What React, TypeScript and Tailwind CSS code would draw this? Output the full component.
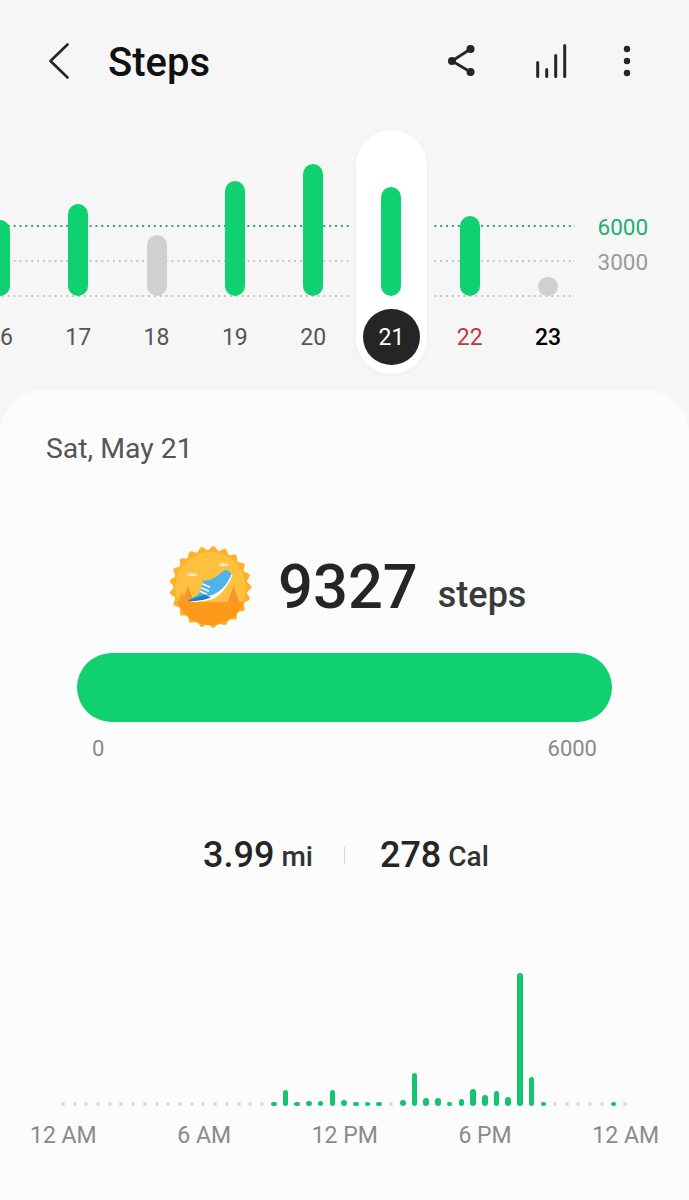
const GREEN = "#10d170";

const days = [
  { label: "16", top: 220, color: "bg-[#10d170]", text: "text-[#555555]" },
  { label: "17", top: 204, color: "bg-[#10d170]", text: "text-[#555555]" },
  { label: "18", top: 235, color: "bg-[#d0d0d0]", text: "text-[#555555]" },
  { label: "19", top: 181, color: "bg-[#10d170]", text: "text-[#555555]" },
  { label: "20", top: 164, color: "bg-[#10d170]", text: "text-[#555555]" },
  { label: "21", top: 187, color: "bg-[#10d170]", text: "text-white", active: true },
  { label: "22", top: 216, color: "bg-[#10d170]", text: "text-[#c0393b]" },
  { label: "23", top: 277, color: "bg-[#d0d0d0]", text: "text-black font-medium" },
];

// half-hour bars, 0 = no steps
const hours = [
  0, 0, 0, 0, 0, 0, 0, 0, 0, 0, 0, 0, 0, 0, 0, 0, 0, 0, 4, 16, 4, 5, 5, 16, 6, 4, 4, 4, 0, 6, 33, 8, 8, 4, 7, 17, 11,
  15, 9, 133, 29, 4, 0, 0, 0, 0, 0, 4, 0,
];

function scallop(cx: number, cy: number, r: number, bumps: number, depth: number) {
  let d = "";
  const n = bumps * 12;
  for (let i = 0; i < n; i++) {
    const a = (i / n) * Math.PI * 2;
    const rr = r + depth * Math.cos(a * bumps);
    d += `${i ? "L" : "M"}${(cx + rr * Math.cos(a)).toFixed(2)} ${(cy + rr * Math.sin(a)).toFixed(2)}`;
  }
  return d + "Z";
}

function Badge() {
  return (
    <svg width="84" height="84" viewBox="0 0 84 84" className="shrink-0">
      <path d={scallop(41.5, 42, 39, 21, 2)} fill="#fcb32c" />
      <circle cx="41.5" cy="42" r="35" fill="#fdc13f" />
      <path d="M7.4 57h68.2a35 35 0 0 1-6 9.5A35 35 0 0 1 13.4 66 35 35 0 0 1 7.4 57Z" fill="#fd9a1a" />
      <path d="M18 31h10a2.4 2.4 0 0 0-4-2 2.6 2.6 0 0 0-4.6.6A1.4 1.4 0 0 0 18 31Z" fill="#fde9bd" />
      <path d="M49.5 21h10a2.4 2.4 0 0 0-4-2 2.6 2.6 0 0 0-4.6.6 1.4 1.4 0 0 0-1.4 1.4Z" fill="#fde9bd" />
      <path d="M9 57l4-10 4 10Z" fill="#f7a02e" />
      <path d="M13 57l6-16 6 16Z" fill="#f7962a" />
      <path d="M58.5 58l6-17 6 17Z" fill="#f7962a" />
      <path
        d="M19.3 55C25 52 29 51 31 47l3-11.5c6 .5 10-1.5 14-4.5l8-6c3 0 5.5 2 6.7 4.5C60 36 58 40 55 43c-5 6-9 9-13 10Z"
        fill="#4fb3e8"
      />
      <path d="M21 57c11 0 23-1 29-7 6-5 11-13 13.5-20l-1-1C60 36 55 43 49 47c-6 4-17 6-28 8Z" fill="#fff" />
      <path d="M19.3 55.4C24 53 30 51 36 50l6 2.6C35 55.5 27 56 21 56.6Z" fill="#1f7fbd" />
      <path d="M33.5 39l7 3M32.5 43l7 3M31.5 46.5l6 2.5" stroke="#fff" strokeWidth="1.4" strokeLinecap="round" />
    </svg>
  );
}

function Header() {
  return (
    <div className="flex h-[124px] shrink-0 items-center pl-[48px] pr-[58px] text-[#252525]">
      <svg width="22" height="38" viewBox="0 0 22 38" fill="none" stroke="currentColor" strokeWidth="2.6" strokeLinecap="round" strokeLinejoin="round">
        <path d="M19.5 1.5 2.5 18l17 16.5" />
      </svg>
      <h1 className="ml-[38px] mt-[1px] text-[40px] font-medium leading-[48px] text-[#111111]">Steps</h1>
      <div className="ml-auto mt-[-3px] flex items-center">
        <svg width="27" height="31" viewBox="0 0 27 31" fill="none">
          <path d="M22.5 4 4 16l18.5 11" stroke="currentColor" strokeWidth="2.8" />
          <circle cx="22.5" cy="4" r="4" fill="currentColor" />
          <circle cx="4" cy="16" r="4" fill="currentColor" />
          <circle cx="22.5" cy="27" r="4" fill="currentColor" />
        </svg>
        <svg className="ml-[61px]" width="31" height="34" viewBox="0 0 31 34" fill="none" stroke="currentColor" strokeWidth="3" strokeLinecap="round">
          <path d="M1.7 32.5v-14M10.7 32.5v-7M19.7 32.5v-21M28.7 32.5v-31" />
        </svg>
        <svg className="ml-[56px]" width="8" height="32" viewBox="0 0 8 32" fill="currentColor">
          <circle cx="4" cy="4" r="3.2" />
          <circle cx="4" cy="16" r="3.2" />
          <circle cx="4" cy="28" r="3.2" />
        </svg>
      </div>
    </div>
  );
}

function WeekChart() {
  return (
    <div className="relative h-[266px] shrink-0 overflow-hidden">
      <div className="absolute left-0 top-[101px] h-[2px] w-[575px] bg-[radial-gradient(circle,#27a56b_1.1px,transparent_1.2px)] bg-[length:5.85px_2px]" />
      <div className="absolute left-0 top-[136px] h-[2px] w-[575px] bg-[radial-gradient(circle,#c4c4c4_1.1px,transparent_1.2px)] bg-[length:5.85px_2px]" />
      <div className="absolute left-0 top-[171px] h-[2px] w-[575px] bg-[radial-gradient(circle,#c4c4c4_1.1px,transparent_1.2px)] bg-[length:5.85px_2px]" />
      <div className="absolute left-[597.5px] top-[90px] text-[22.5px] leading-[27px] text-[#1fae6f]">6000</div>
      <div className="absolute left-[597.5px] top-[125px] text-[22.5px] leading-[27px] text-[#9a9a9a]">3000</div>

      <div className="relative ml-[-39.2px] flex pt-[6px]">
        {days.map((d) => (
          <div key={d.label} className={d.active ? "w-[78.3px] shrink-0 bg-[#f6f6f6]" : "w-[78.3px] shrink-0"}>
            <div className={d.active ? "mx-auto flex h-[244px] w-[71px] flex-col items-center rounded-full bg-white shadow-[0_1px_6px_rgba(0,0,0,0.04)]" : "mx-auto flex h-[244px] w-[71px] flex-col items-center"}>
              <div className="flex h-[166px] flex-col justify-end">
                <div className={`w-[20px] rounded-full ${d.color}`} style={{ height: 296 - d.top }} />
              </div>
              <div className={d.active ? "mt-[13px] flex h-[56px] w-[57px] items-center justify-center rounded-full bg-[#252525] pt-[3px] text-[23px] text-white" : `mt-[13px] flex h-[56px] w-[57px] items-center justify-center pt-[3px] text-[23px] ${d.text}`}>
                {d.label}
              </div>
            </div>
          </div>
        ))}
      </div>
    </div>
  );
}

function DayChart() {
  return (
    <div className="mt-[95px] flex flex-col">
      <div className="flex h-[134px] items-end pl-[57px]">
        {hours.map((h, i) => (
          <div key={i} className="flex w-[11.72px] shrink-0 justify-center">
            <div
              className={h ? "w-[5.6px] rounded-full bg-[#14c46e]" : "h-[4px] w-[4px] rounded-full bg-[#dcdcdc]"}
              style={h ? { height: h } : undefined}
            />
          </div>
        ))}
      </div>
      <div className="mt-[16px] flex justify-between px-[30px] text-[23px] leading-[28px] text-[#8a8a8a]">
        <span>12 AM</span>
        <span>6 AM</span>
        <span>12 PM</span>
        <span>6 PM</span>
        <span>12 AM</span>
      </div>
    </div>
  );
}

export default function App() {
  return (
    <div className="flex h-[1200px] w-[689px] flex-col overflow-hidden bg-[#f6f6f6] font-['Roboto',sans-serif]">
      <Header />
      <WeekChart />
      <div className="flex-1 rounded-t-[44px] bg-[#fcfcfc]">
        <div className="pl-[46px] pt-[42px] text-[28.4px] leading-[34px] text-[#555555]">Sat, May 21</div>
        <div className="mt-[79px] flex items-center pl-[169px]">
          <Badge />
          <span className="ml-[25px] text-[61.5px] font-medium leading-[76px] text-[#252525]">9327</span>
          <span className="ml-[20px] mt-[16px] text-[36px] font-medium leading-[44px] text-[#3a3a3a]">steps</span>
        </div>
        <div className="mx-[77px] mt-[24px] h-[69px] rounded-full" style={{ backgroundColor: GREEN }} />
        <div className="mx-[92px] mt-[14px] flex justify-between text-[22px] leading-[26px] text-[#8a8a8a]">
          <span>0</span>
          <span>6000</span>
        </div>
        <div className="mt-[71px] flex items-center pl-[203px] text-[#252525]">
          <span className="text-[36px] font-medium leading-[44px]">3.99</span>
          <span className="ml-[7px] mt-[4px] text-[28px] font-medium leading-[32px] text-[#333333]">mi</span>
          <span className="ml-[31px] mr-[35px] h-[17px] w-[1px] bg-[#d8d8d8]" />
          <span className="text-[36px] font-medium leading-[44px]">278</span>
          <span className="ml-[7px] mt-[4px] text-[28px] font-medium leading-[32px] text-[#333333]">Cal</span>
        </div>
        <DayChart />
      </div>
    </div>
  );
}
